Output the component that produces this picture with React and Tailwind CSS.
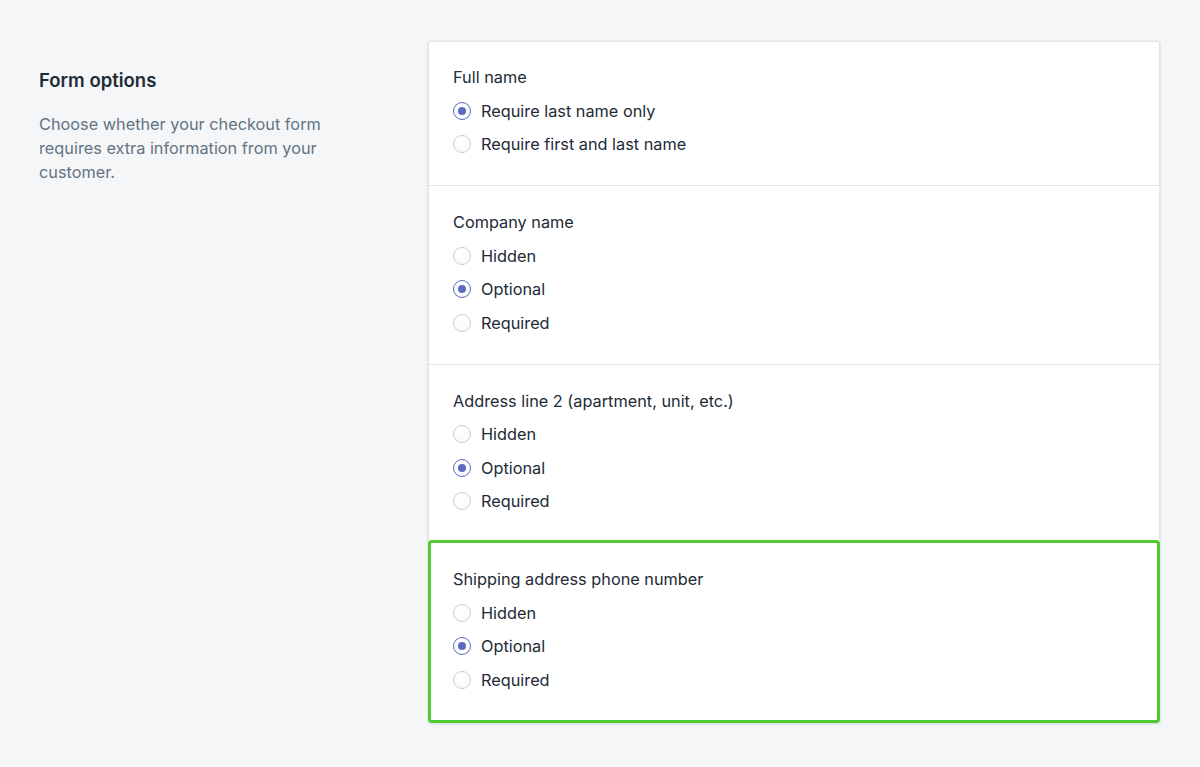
import React from "react";

const font = { fontFamily: "Inter, 'Noto Sans', sans-serif" };

function Radio({ checked, label }) {
  return (
    <div className="flex items-center h-[33.5px]">
      <span
        className={
          "relative flex items-center justify-center w-[18px] h-[18px] rounded-full border bg-gradient-to-b from-white to-[#f9fafb] " +
          (checked ? "border-[#5c6ac4] border-[1.5px]" : "border-[#c4cdd5]")
        }
      >
        {checked && <span className="w-[8px] h-[8px] rounded-full bg-[#5c6ac4]" />}
      </span>
      <span className="ml-[10px] text-[16.3px] leading-[24px] text-[#212b36]">{label}</span>
    </div>
  );
}

function Options({ title, options, selected }) {
  return (
    <>
      <div className="text-[16.3px] leading-[24px] text-[#212b36] mb-[5px]">{title}</div>
      {options.map((o) => (
        <Radio key={o} label={o} checked={o === selected} />
      ))}
    </>
  );
}

export default function App() {
  return (
    <div className="min-h-[767px] w-full bg-[#f4f6f8] flex pt-[41px] pl-[39px]" style={font}>
      <div className="w-[389px] shrink-0 pt-[27px]">
        <h2 className="text-[18.5px] leading-[24px] font-semibold text-[#212b36]">Form options</h2>
        <p className="mt-[20px] w-[300px] text-[16.3px] leading-[24px] text-[#637381]">
          Choose whether your checkout form requires extra information from your customer.
        </p>
      </div>
      <div className="w-[732px] flex flex-col bg-white border border-[#e3e6e9] rounded-[3px] shadow-[0_0_0_1px_rgba(63,63,68,0.03),0_1px_3px_0_rgba(63,63,68,0.12)] self-start">
        <div className="pl-[24px] pt-[23px] pb-[24px] border-b border-[#dfe3e8]">
          <Options
            title="Full name"
            options={["Require last name only", "Require first and last name"]}
            selected="Require last name only"
          />
        </div>
        <div className="pl-[24px] pt-[24px] pb-[24px] border-b border-[#dfe3e8]">
          <Options
            title="Company name"
            options={["Hidden", "Optional", "Required"]}
            selected="Optional"
          />
        </div>
        <div className="pl-[24px] pt-[24px] pb-[22px]">
          <Options
            title="Address line 2 (apartment, unit, etc.)"
            options={["Hidden", "Optional", "Required"]}
            selected="Optional"
          />
        </div>
        <div className="-mx-[1px] -mb-[1px] pl-[22px] pt-[24px] pb-[23px] border-[3px] border-[#4fca30] rounded-[4px] bg-white">
          <Options
            title="Shipping address phone number"
            options={["Hidden", "Optional", "Required"]}
            selected="Optional"
          />
        </div>
      </div>
    </div>
  );
}
